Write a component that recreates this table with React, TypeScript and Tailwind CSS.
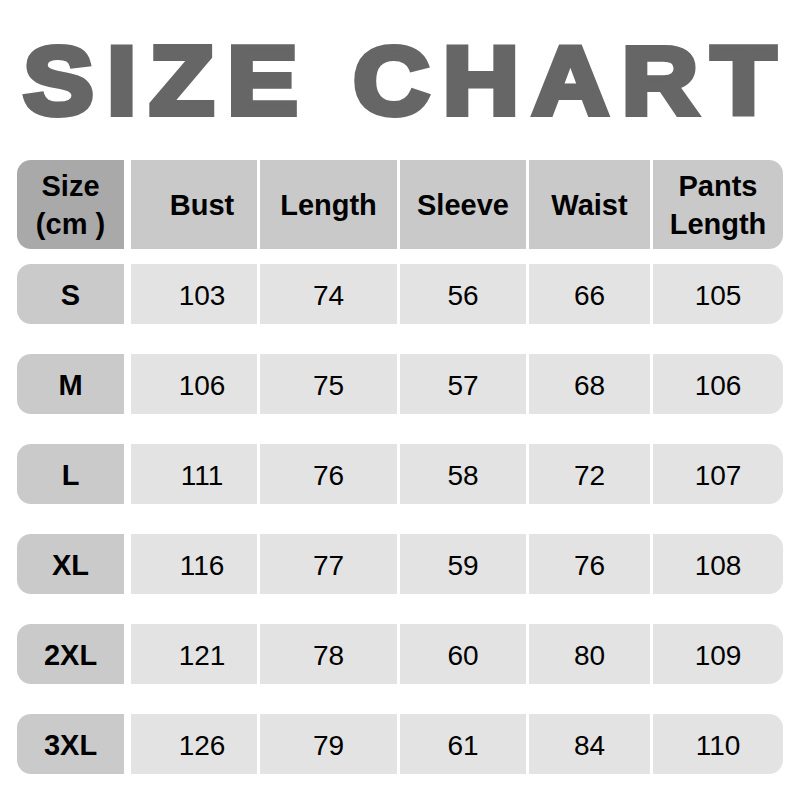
const headers = ["Bust", "Length", "Sleeve", "Waist", "Pants Length"];

const rows = [
  { size: "S", values: [103, 74, 56, 66, 105] },
  { size: "M", values: [106, 75, 57, 68, 106] },
  { size: "L", values: [111, 76, 58, 72, 107] },
  { size: "XL", values: [116, 77, 59, 76, 108] },
  { size: "2XL", values: [121, 78, 60, 80, 109] },
  { size: "3XL", values: [126, 79, 61, 84, 110] },
];

// widths of the data columns, left to right
const colWidths = ["w-[126px] pl-4", "w-[137px]", "w-[126px]", "w-[121px]", "w-[130px]"];

const App = () => {
  return (
    <div className="h-[800px] w-[800px] overflow-hidden bg-white font-['Liberation_Sans',Arial,sans-serif] text-black">
      {/* Title */}
      <div className="pt-[33px]">
        <h1 className="h-[96px] scale-x-[1.1] pl-[11px] text-center text-[96px] font-bold leading-[96px] tracking-[12px] text-[#666666] [-webkit-text-stroke:6px_#666666]">
          SIZE CHART
        </h1>
      </div>

      {/* Table */}
      <div className="mt-[31px] flex flex-col px-[17px]">
        {/* Header */}
        <div className="flex h-[89px] items-stretch">
          <div className="flex w-[107px] flex-col items-center justify-center rounded-l-[14px] bg-[#a9a9a9] text-[29px] font-bold leading-[38px]">
            <span>Size</span>
            <span>(cm )</span>
          </div>
          <div className="ml-[7px] flex gap-[3px]">
            {headers.map((h, i) => (
              <div
                key={h}
                className={`flex items-center justify-center bg-[#c9c9c9] text-center text-[29px] font-bold leading-[38px] ${colWidths[i]} ${
                  i === headers.length - 1 ? "rounded-r-[14px]" : ""
                }`}
              >
                {h === "Pants Length" ? (
                  <span className="flex flex-col">
                    <span>Pants</span>
                    <span>Length</span>
                  </span>
                ) : (
                  h
                )}
              </div>
            ))}
          </div>
        </div>

        {/* Rows */}
        <div className="mt-[15px] flex flex-col gap-[30px]">
          {rows.map((row) => (
            <div key={row.size} className="flex h-[60px] items-stretch">
              <div className="flex w-[107px] items-center justify-center rounded-l-[14px] bg-[#cacaca] pt-[3px] text-[29px] font-bold">
                {row.size}
              </div>
              <div className="ml-[7px] flex gap-[3px]">
                {row.values.map((v, i) => (
                  <div
                    key={i}
                    className={`flex items-center justify-center bg-[#e3e3e3] pt-[3px] text-[28px] ${colWidths[i]} ${
                      i === row.values.length - 1 ? "rounded-r-[14px]" : ""
                    }`}
                  >
                    {v}
                  </div>
                ))}
              </div>
            </div>
          ))}
        </div>
      </div>
    </div>
  );
};

export default App;
